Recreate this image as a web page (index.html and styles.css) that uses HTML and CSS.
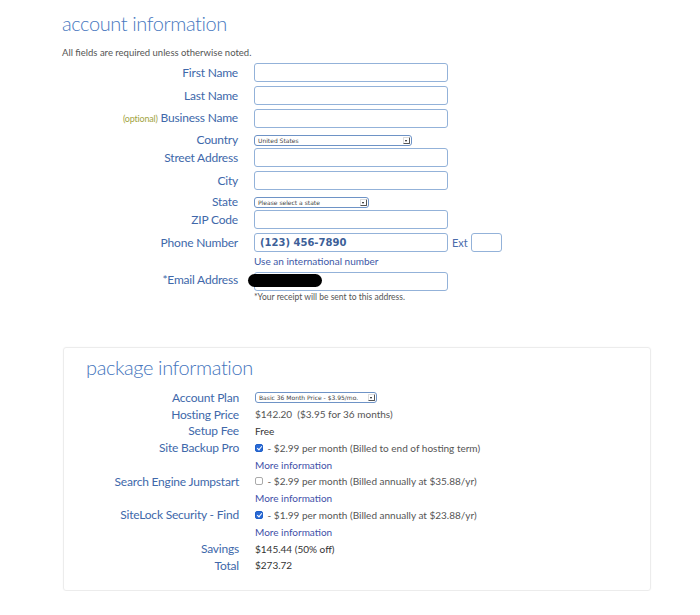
FILE: index.html
```html
<!DOCTYPE html>
<html lang="en">
<head>
    <meta charset="UTF-8">
    <meta name="viewport" content="width=device-width, initial-scale=1.0">
    <title>Account information</title>
    <link rel="stylesheet" href="styles.css">
</head>
<body>

<div class="page">
    <h1>account information</h1>
    <p class="note">All fields are required unless otherwise noted.</p>

    <div class="form">
        <div class="row">
            <label>First Name</label>
            <input type="text">
        </div>
        <div class="row">
            <label>Last Name</label>
            <input type="text">
        </div>
        <div class="row">
            <label><span class="optional">(optional)</span> Business Name</label>
            <input type="text">
        </div>
        <div class="row row-sel">
            <label>Country</label>
            <div class="select select-wide"><span>United States</span><i class="arrow"></i></div>
        </div>
        <div class="row after-sel">
            <label>Street Address</label>
            <input type="text">
        </div>
        <div class="row">
            <label>City</label>
            <input type="text">
        </div>
        <div class="row row-sel">
            <label>State</label>
            <div class="select select-state"><span>Please select a state</span><i class="arrow"></i></div>
        </div>
        <div class="row after-sel">
            <label>ZIP Code</label>
            <input type="text">
        </div>
        <div class="row">
            <label>Phone Number</label>
            <input type="text" class="phone" value="(123) 456-7890">
            <span class="ext-label">Ext</span>
            <input type="text" class="ext">
        </div>
        <div class="hint"><a href="#">Use an international number</a></div>
        <div class="row row-email">
            <label>*Email Address</label>
            <div class="email-wrap">
                <input type="text">
                <span class="redact"></span>
            </div>
        </div>
        <div class="receipt">*Your receipt will be sent to this address.</div>
    </div>

    <div class="panel">
        <h2>package information</h2>

        <div class="prow">
            <label>Account Plan</label>
            <div class="select select-plan"><span>Basic 36 Month Price - $3.95/mo.</span><i class="arrow"></i></div>
        </div>
        <div class="prow">
            <label>Hosting Price</label>
            <span class="val">$142.20 &nbsp;($3.95 for 36 months)</span>
        </div>
        <div class="prow">
            <label>Setup Fee</label>
            <span class="val dark">Free</span>
        </div>
        <div class="prow">
            <label>Site Backup Pro</label>
            <span class="val"><i class="check on"></i> - $2.99 per month (Billed to end of hosting term)</span>
        </div>
        <div class="prow">
            <label></label>
            <a href="#" class="more">More information</a>
        </div>
        <div class="prow">
            <label>Search Engine Jumpstart</label>
            <span class="val"><i class="check"></i> - $2.99 per month (Billed annually at $35.88/yr)</span>
        </div>
        <div class="prow">
            <label></label>
            <a href="#" class="more">More information</a>
        </div>
        <div class="prow">
            <label>SiteLock Security - Find</label>
            <span class="val"><i class="check on"></i> - $1.99 per month (Billed annually at $23.88/yr)</span>
        </div>
        <div class="prow">
            <label></label>
            <a href="#" class="more">More information</a>
        </div>
        <div class="prow">
            <label>Savings</label>
            <span class="val dark">$145.44 (50% off)</span>
        </div>
        <div class="prow">
            <label>Total</label>
            <span class="val dark">$273.72</span>
        </div>
    </div>
</div>

</body>
</html>
```

FILE: styles.css
```css
body {
    margin: 0;
    background: #fff;
    font-family: Lato, "Open Sans", sans-serif;
}
.page {
    padding-left: 62px;
}
h1 {
    margin: 10px 0 0;
    font-size: 20px;
    line-height: 26px;
    font-weight: 300;
    letter-spacing: -0.4px;
    color: #4878c0;
}
.note {
    margin: 11px 0 0;
    font-size: 9.5px;
    line-height: 12px;
    color: #555;
}
.row {
    display: flex;
    align-items: center;
    height: 19px;
    margin-top: 4px;
}
.row label {
    width: 176px;
    margin-right: 16px;
    text-align: right;
    font-size: 12px;
    line-height: 14px;
    color: #4068aa;
    white-space: nowrap;
    letter-spacing: -0.2px;
}
.optional {
    font-size: 9px;
    color: #a3a443;
}
.row-sel {
    height: 12px;
    margin-top: 6px;
}
.after-sel {
    margin-top: 2px;
}
input {
    box-sizing: border-box;
    width: 194px;
    height: 19px;
    margin: 0;
    padding: 0 5px;
    border: 1.5px solid #93b2d9;
    border-radius: 3px;
    font-family: "DejaVu Sans", sans-serif;
    font-size: 10px;
    color: #3b4f7a;
    outline: none;
}
.phone {
    font-weight: bold;
    color: #3d5f98;
}
.ext-label {
    margin: 0 3px 0 4px;
    font-size: 11px;
    color: #4a6cab;
}
input.ext {
    width: 31px;
}
.select {
    box-sizing: border-box;
    display: flex;
    align-items: center;
    justify-content: space-between;
    height: 11px;
    padding: 0 1px 0 3px;
    border: 1px solid #6e93c6;
    border-radius: 3px;
    background: #fff;
    font-family: "DejaVu Sans", sans-serif;
    font-size: 6px;
    color: #444;
}
.select-wide {
    width: 158px;
}
.select-state {
    width: 115px;
}
.select-plan {
    width: 122px;
}
.arrow {
    width: 7px;
    height: 7px;
    border-radius: 1px;
    background: #fff;
    border: 1px solid #555;
    border-top-color: #ddd;
    border-left-color: #ddd;
    position: relative;
    box-sizing: border-box;
}
.arrow::after {
    content: "";
    position: absolute;
    left: 1px;
    top: 2px;
    border-left: 1.5px solid transparent;
    border-right: 1.5px solid transparent;
    border-top: 2px solid #111;
}
.hint {
    margin: 3px 0 0 192px;
    height: 12px;
    font-size: 10px;
    line-height: 12px;
}
.hint a {
    color: #3d58a6;
    text-decoration: none;
}
.row-email {
    margin-top: 3px;
}
.email-wrap {
    position: relative;
}
.redact {
    position: absolute;
    left: -6px;
    top: 5px;
    width: 74px;
    height: 13px;
    border-radius: 7px;
    background: #000;
}
.receipt {
    margin: 2px 0 0 192px;
    font-size: 8.5px;
    line-height: 12px;
    color: #555;
}
.panel {
    box-sizing: border-box;
    width: 588px;
    margin: 44px 0 0 1px;
    padding: 6px 0 16px 22px;
    border: 1px solid #ececec;
    border-radius: 3px;
    box-shadow: 0 0 2px rgba(0, 0, 0, 0.04);
}
h2 {
    margin: 0 0 9px;
    font-size: 20px;
    line-height: 26px;
    font-weight: 300;
    letter-spacing: -0.4px;
    color: #4575bd;
}
.prow {
    display: flex;
    align-items: center;
    height: 16.8px;
}
.prow label {
    width: 153px;
    margin-right: 16px;
    text-align: right;
    font-size: 12px;
    color: #4068aa;
    white-space: nowrap;
    letter-spacing: -0.2px;
}
.val {
    display: flex;
    align-items: center;
    font-size: 10px;
    color: #555;
    white-space: pre;
}
.val.dark {
    color: #333;
}
.more {
    font-size: 10px;
    color: #4150a8;
    text-decoration: none;
}
.check {
    box-sizing: border-box;
    display: inline-block;
    width: 8px;
    height: 8px;
    margin-right: 2px;
    border: 1px solid #aaa;
    border-radius: 2px;
    background: #fff;
    position: relative;
}
.check.on {
    border-color: #1f5fc8;
    background: #2a6ad6;
}
.check.on::after {
    content: "";
    position: absolute;
    left: 2px;
    top: 0;
    width: 2px;
    height: 4px;
    border-right: 1px solid #fff;
    border-bottom: 1px solid #fff;
    transform: rotate(40deg);
}
```
